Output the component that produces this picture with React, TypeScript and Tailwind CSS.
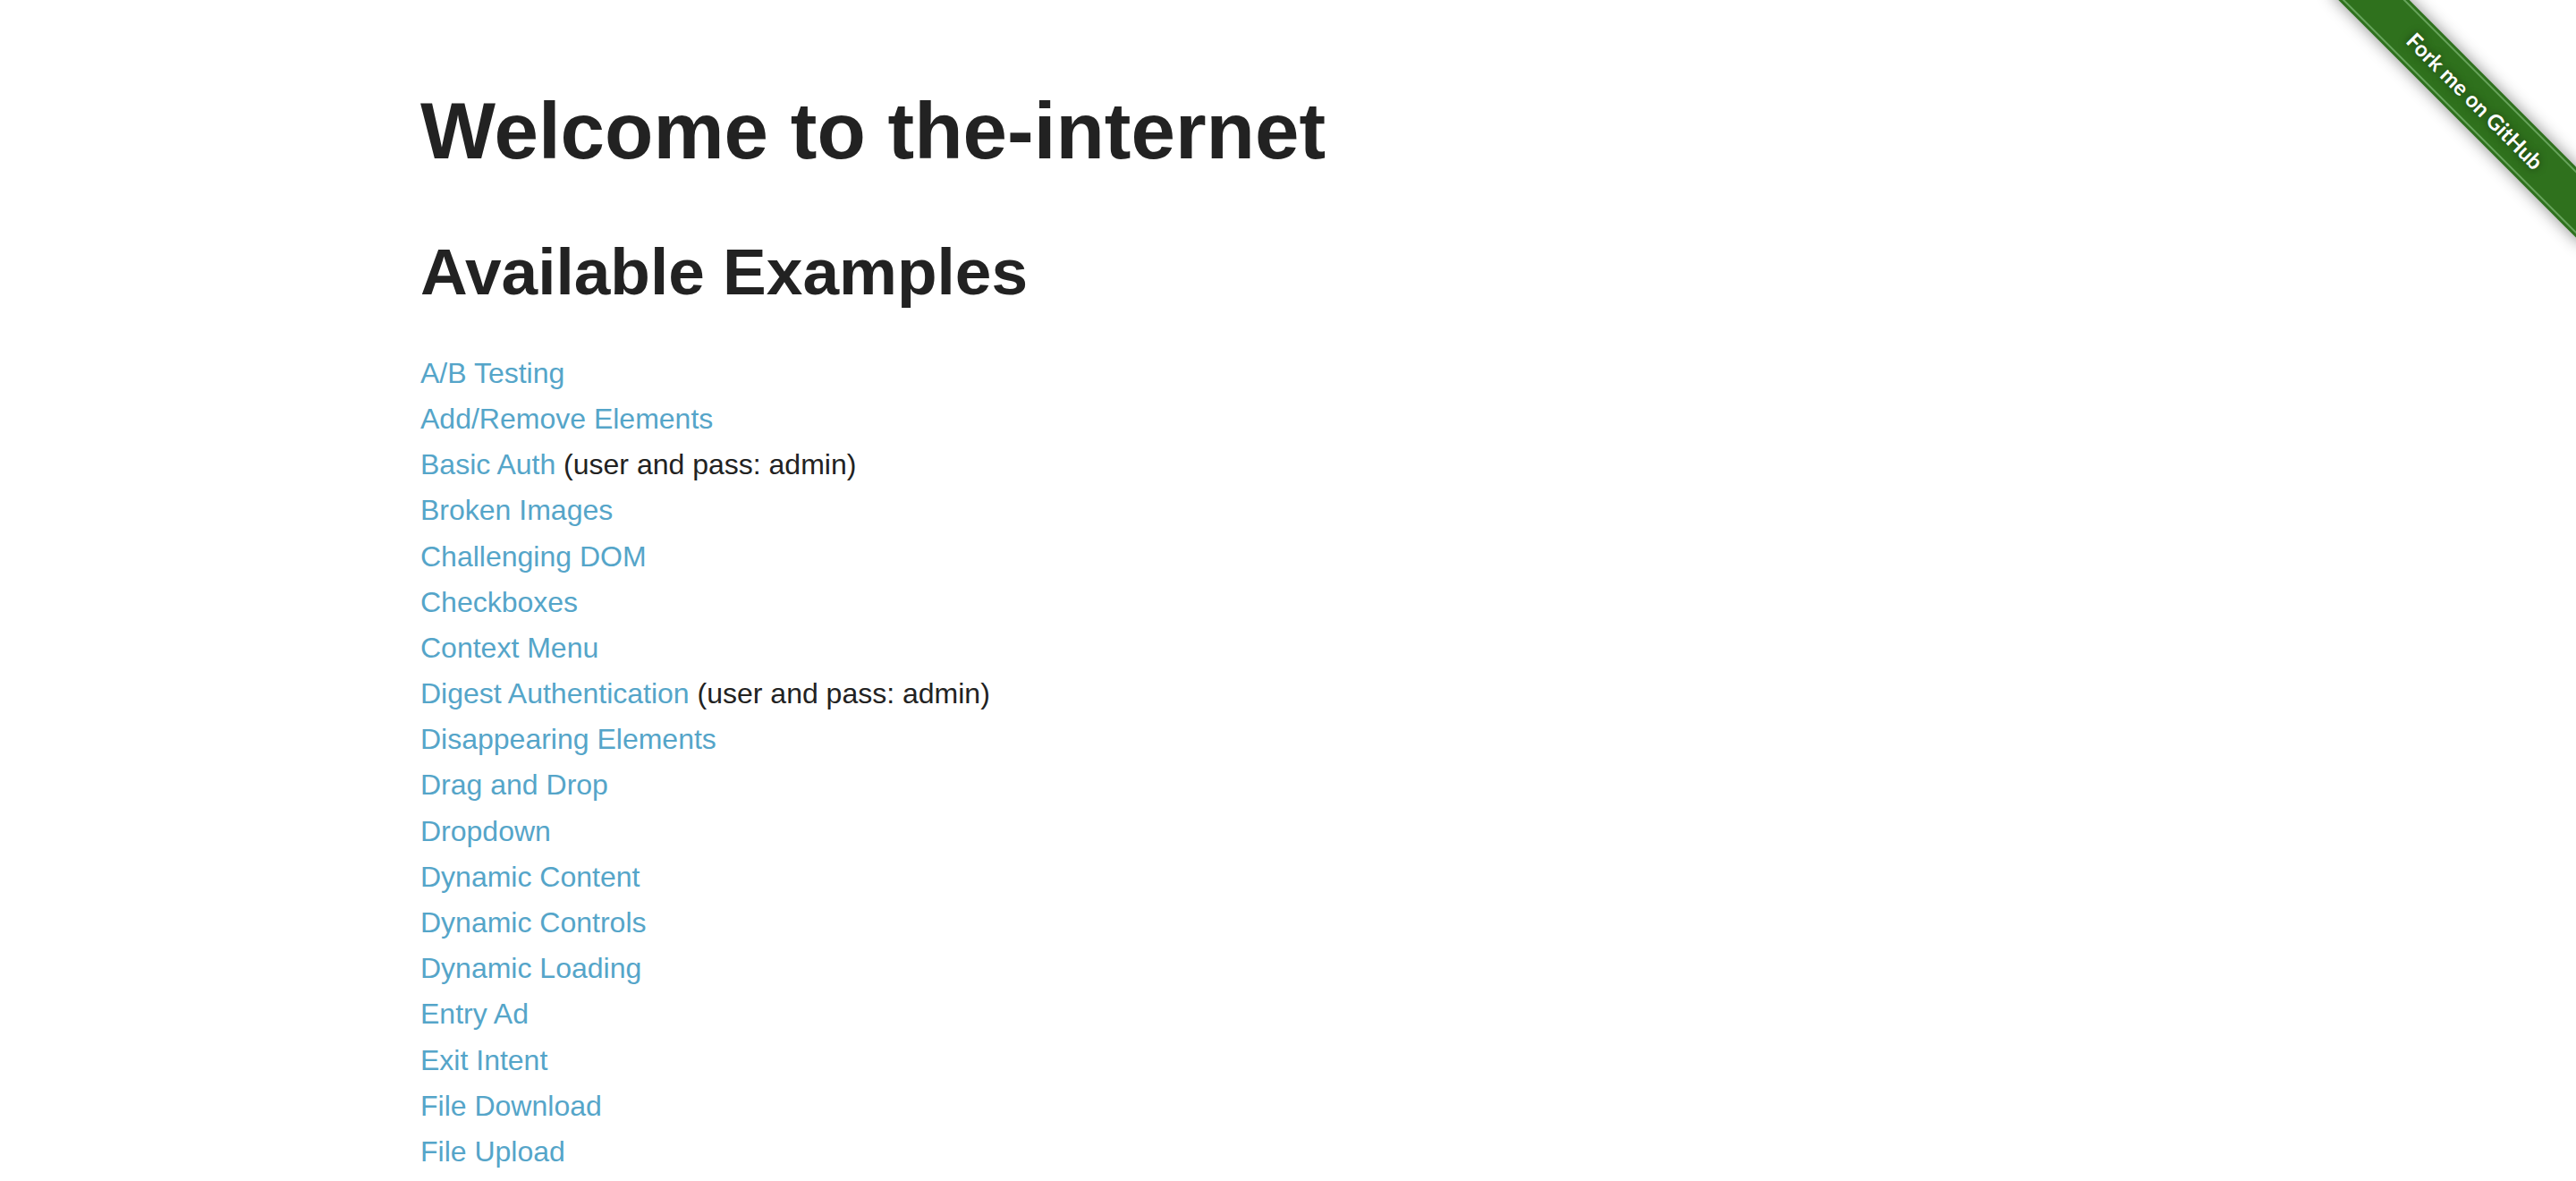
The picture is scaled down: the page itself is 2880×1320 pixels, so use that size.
const credentials = "(user and pass: admin)";

const examples: { name: string; note?: string }[] = [
  { name: "A/B Testing" },
  { name: "Add/Remove Elements" },
  { name: "Basic Auth", note: credentials },
  { name: "Broken Images" },
  { name: "Challenging DOM" },
  { name: "Checkboxes" },
  { name: "Context Menu" },
  { name: "Digest Authentication", note: credentials },
  { name: "Disappearing Elements" },
  { name: "Drag and Drop" },
  { name: "Dropdown" },
  { name: "Dynamic Content" },
  { name: "Dynamic Controls" },
  { name: "Dynamic Loading" },
  { name: "Entry Ad" },
  { name: "Exit Intent" },
  { name: "File Download" },
  { name: "File Upload" },
];

function ForkRibbon() {
  return (
    <div className="pointer-events-none absolute top-0 right-0 size-[298px] overflow-hidden">
      <a
        href="#fork"
        className="pointer-events-auto absolute top-[85px] -right-[87px] flex h-14 w-[400px] rotate-45 flex-col justify-center bg-[#2f711d] py-[3px] shadow-[0_0_18px_rgba(0,0,0,0.45)]"
      >
        <span className="flex flex-1 items-center justify-center border-y-2 border-[#67a45c] font-['Lato',sans-serif] text-2xl font-bold text-white [text-shadow:0_0_8px_rgba(0,0,0,0.5)]">
          Fork me on GitHub
        </span>
      </a>
    </div>
  );
}

export default function App() {
  return (
    <div className="relative bg-white font-['Liberation_Sans',Arial,sans-serif] text-[#222222]">
      <ForkRibbon />
      <main className="mx-auto max-w-[2000px] px-[30px] pt-[84px]">
        <h1 className="text-[89px] leading-[1.4] font-bold">Welcome to the-internet</h1>
        <h2 className="mt-[44px] text-[73px] leading-[1.4] font-bold">Available Examples</h2>
        <ul className="mt-[37px] text-[32px] leading-[1.6]">
          {examples.map(({ name, note }) => (
            <li key={name}>
              <a href="#example" className="text-[#55a5c9] hover:text-[#2ba6cb]">
                {name}
              </a>
              {note && ` ${note}`}
            </li>
          ))}
        </ul>
      </main>
    </div>
  );
}
